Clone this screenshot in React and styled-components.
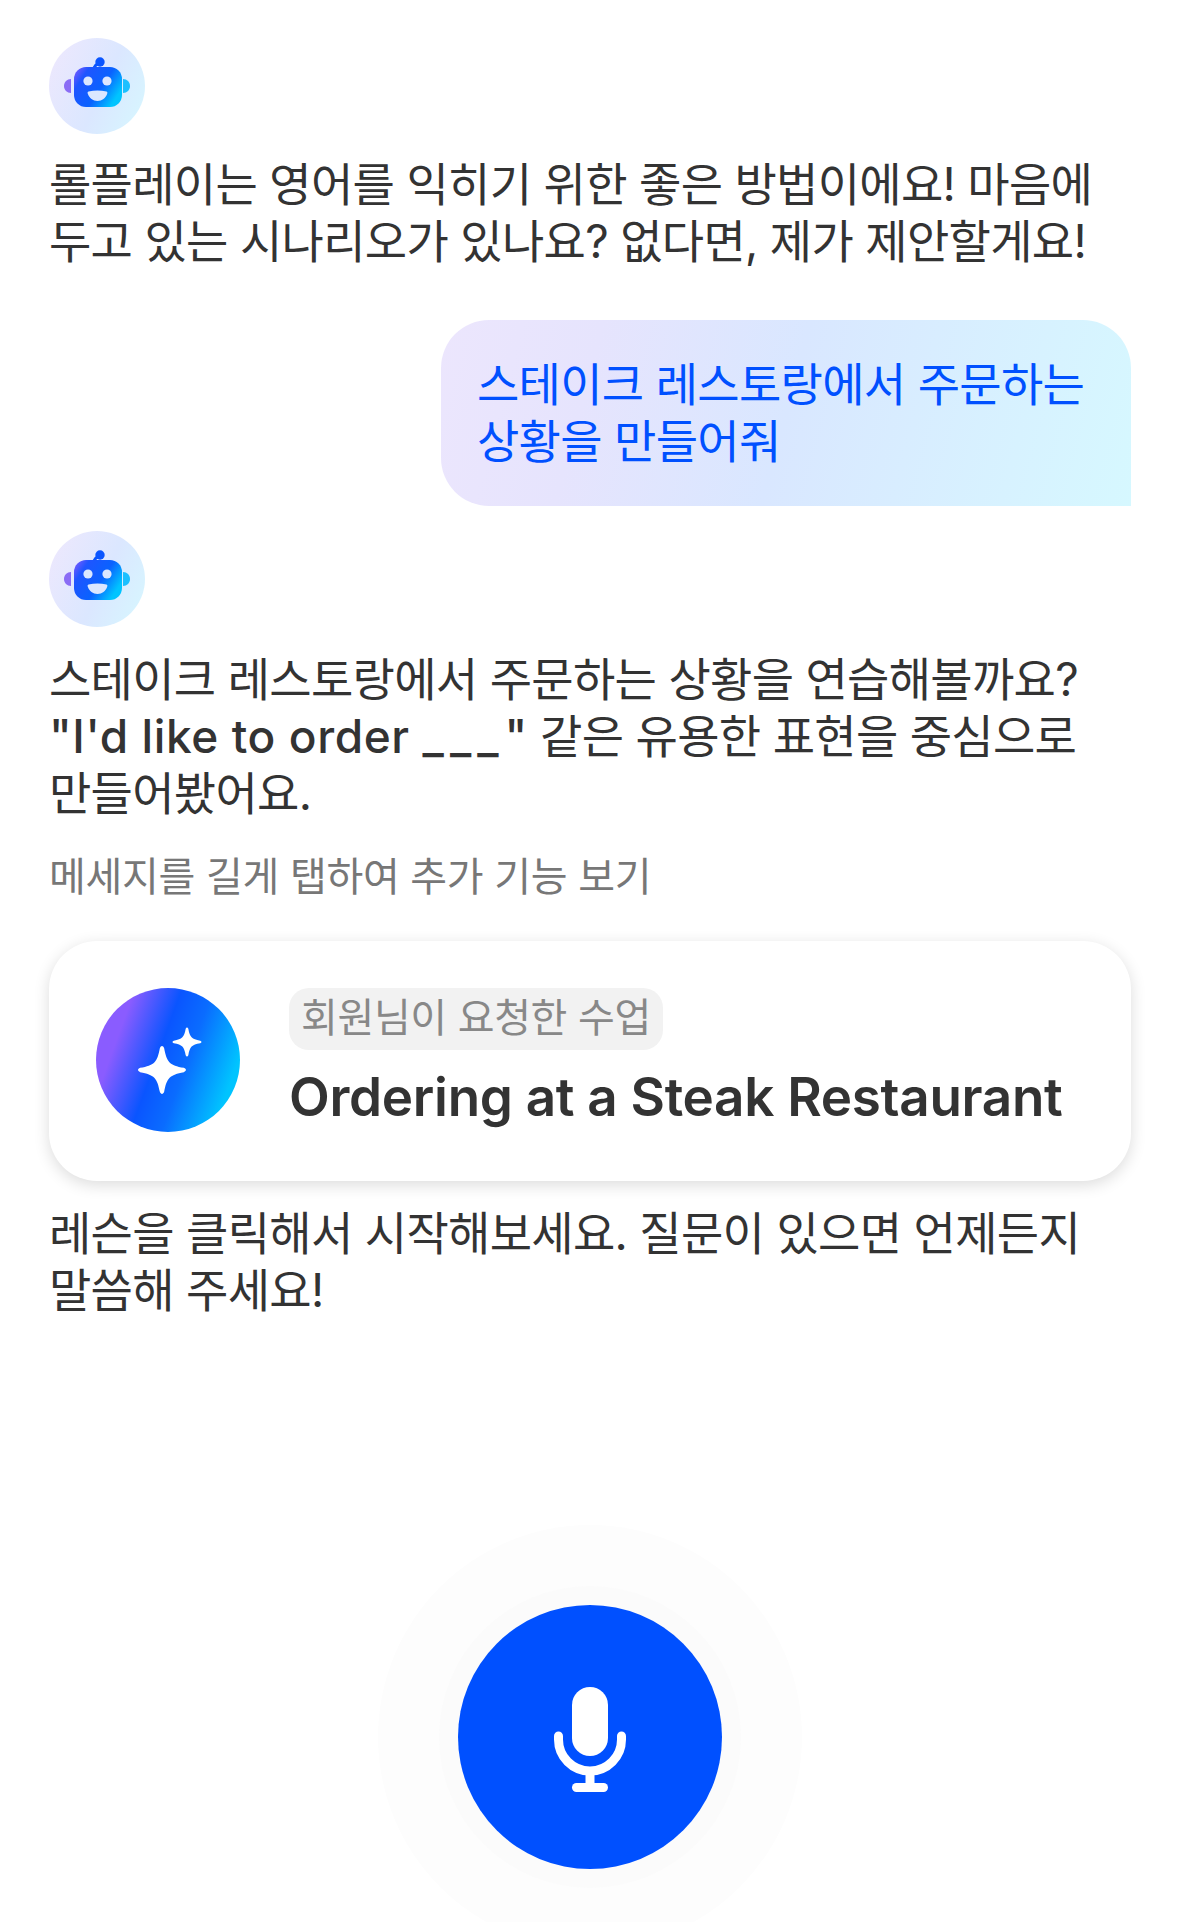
import React from 'react'
import styled, { createGlobalStyle } from 'styled-components'

const GlobalStyle = createGlobalStyle`
  html, body {
    margin: 0;
    padding: 0;
    background: #fff;
  }
  body {
    font-family: "Inter", "Noto Sans CJK KR", sans-serif;
    -webkit-font-smoothing: antialiased;
  }
`

const Page = styled.div`
  width: 1179px;
  height: 1922px;
  box-sizing: border-box;
  padding: 38px 48px 0 49px;
  overflow: hidden;
  display: flex;
  flex-direction: column;
  position: relative;
`

const AvatarWrap = styled.div`
  width: 96px;
  height: 96px;
  border-radius: 50%;
  flex-shrink: 0;
  background: linear-gradient(115deg, #efe8fd 0%, #dbe7ff 55%, #d6f8ff 100%);
`

const Message = styled.div`
  font-size: 46px;
  line-height: 57px;
  font-weight: 400;
  letter-spacing: -0.7px;
  color: #333;
  white-space: nowrap;
  margin-top: ${p => p.$top}px;
`

const LatinRun = styled.span`
  letter-spacing: 0.6px;
  font-weight: 500;
`

const Blank = styled.span`
  letter-spacing: 6px;
`

const Bubble = styled.div`
  align-self: flex-end;
  width: 690px;
  box-sizing: border-box;
  margin-top: 50px;
  margin-bottom: 25px;
  padding: 36px;
  border-radius: 48px 48px 0 48px;
  background: linear-gradient(105deg, #ece6fd 0%, #e6e4fd 22%, #d9e7ff 50%, #d6f8ff 100%);
  color: #0050ff;
  font-size: 46px;
  line-height: 57px;
  letter-spacing: -0.7px;
  white-space: nowrap;
`

const Hint = styled.div`
  margin-top: 30px;
  font-size: 40px;
  line-height: 50px;
  letter-spacing: -0.3px;
  color: #777;
`

const Card = styled.div`
  margin-top: 39px;
  height: 240px;
  box-sizing: border-box;
  padding: 47px 47px 0;
  border-radius: 48px;
  background: #fff;
  box-shadow: 0 4px 16px rgba(0, 0, 0, 0.14);
  display: flex;
  align-items: flex-start;
  gap: 49px;
`

const LessonBadge = styled.div`
  width: 144px;
  height: 144px;
  flex-shrink: 0;
  border-radius: 50%;
  background: linear-gradient(110deg, #8a5cff 20%, #0a55ff 44%, #0a6cff 60%, #00c4ff 86%);
`

const CardBody = styled.div`
  display: flex;
  flex-direction: column;
  align-items: flex-start;
  min-width: 0;
`

const Tag = styled.div`
  height: 62px;
  box-sizing: border-box;
  padding: 0 12px;
  border-radius: 20px;
  background: #f2f2f2;
  color: #888;
  font-size: 40px;
  line-height: 60px;
  letter-spacing: -0.35px;
  white-space: nowrap;
`

const Title = styled.div`
  margin-top: 15px;
  font-size: 53px;
  line-height: 64px;
  font-weight: 600;
  letter-spacing: -0.3px;
  color: #333;
  white-space: nowrap;
`

const MicDock = styled.div`
  position: absolute;
  left: 378px;
  top: 1525px;
  width: 424px;
  height: 424px;
  border-radius: 50%;
  background: #fdfdfd;
  display: flex;
  align-items: center;
  justify-content: center;
`

const MicHalo = styled.div`
  width: 302px;
  height: 302px;
  border-radius: 50%;
  background: #fbfbfb;
  display: flex;
  align-items: center;
  justify-content: center;
`

const MicButton = styled.button`
  width: 264px;
  height: 264px;
  padding: 0;
  border: 0;
  border-radius: 50%;
  background: #0050ff;
  display: flex;
  align-items: center;
  justify-content: center;
`

// four-point sparkle with softened tips
const sparkle = (cx, cy, r) => {
  const t = r * 0.09
  const k = r * 0.2
  return `M${cx - t} ${cy - r + t}
    C${cx - t * 0.5} ${cy - r - t * 0.3} ${cx + t * 0.5} ${cy - r - t * 0.3} ${cx + t} ${cy - r + t}
    C${cx + k} ${cy - k * 1.6} ${cx + k * 1.6} ${cy - k} ${cx + r - t} ${cy - t}
    C${cx + r + t * 0.3} ${cy - t * 0.5} ${cx + r + t * 0.3} ${cy + t * 0.5} ${cx + r - t} ${cy + t}
    C${cx + k * 1.6} ${cy + k} ${cx + k} ${cy + k * 1.6} ${cx + t} ${cy + r - t}
    C${cx + t * 0.5} ${cy + r + t * 0.3} ${cx - t * 0.5} ${cy + r + t * 0.3} ${cx - t} ${cy + r - t}
    C${cx - k} ${cy + k * 1.6} ${cx - k * 1.6} ${cy + k} ${cx - r + t} ${cy + t}
    C${cx - r - t * 0.3} ${cy + t * 0.5} ${cx - r - t * 0.3} ${cy - t * 0.5} ${cx - r + t} ${cy - t}
    C${cx - k * 1.6} ${cy - k} ${cx - k} ${cy - k * 1.6} ${cx - t} ${cy - r + t}Z`
}

const RobotAvatar = ({ id }) => (
  <AvatarWrap>
    <svg width="96" height="96" viewBox="0 0 96 96">
      <defs>
        <linearGradient id={id} x1="0" y1="0" x2="1" y2="0.55">
          <stop offset="0" stopColor="#8a5cff" />
          <stop offset="0.25" stopColor="#1f55ff" />
          <stop offset="0.65" stopColor="#0a62ff" />
          <stop offset="1" stopColor="#00c4ff" />
        </linearGradient>
      </defs>
      <path d="M15 48c0-4 3-7 7-7v14c-4 0-7-3-7-7z" fill="#8a6cf5" />
      <path d="M81 48c0-4-3-7-7-7v14c4 0 7-3 7-7z" fill="#1cc0ff" />
      <path d="M45 30c1-3 3-4 5-5" fill="none" stroke="#0a55ff" strokeWidth="3" />
      <circle cx="51" cy="24" r="4.7" fill="#0a55ff" />
      <rect x="25" y="29" width="48" height="40" rx="12" fill={`url(#${id})`} />
      <circle cx="39" cy="43" r="4.6" fill="#dbe7ff" />
      <circle cx="58" cy="43" r="4.6" fill="#dbe7ff" />
      <path d="M39.5 53.5c6-1.5 12-1.5 18 0 1.2.4 1 1.6.6 2.6-1.4 4-5 6.900-9.600 6.900s-8.200-2.900-9.600-6.900c-.4-1-.600-2.200.6-2.600z" fill="#dbe7ff" />
    </svg>
  </AvatarWrap>
)

const SparkleIcon = () => (
  <svg width="144" height="144" viewBox="0 0 144 144">
    <path d={sparkle(66, 82, 24)} fill="#fff" />
    <path d={sparkle(91, 54, 14.5)} fill="#fff" />
  </svg>
)

const MicIcon = () => (
  <svg width="72" height="105" viewBox="0 0 72 105" style={{ marginTop: 4 }}>
    <rect x="18" y="0" width="36" height="69" rx="18" fill="#fff" />
    <path d="M4.500 49v3.500a31.500 31.500 0 0 0 63 0V49" fill="none" stroke="#fff" strokeWidth="9" strokeLinecap="round" />
    <path d="M36 84v16" stroke="#fff" strokeWidth="9" />
    <path d="M22.500 100.500h27" stroke="#fff" strokeWidth="9" strokeLinecap="round" />
  </svg>
)

const App = () => {
  return (
    <>
      <GlobalStyle />
      <Page>
        <RobotAvatar id="robot-a" />
        <Message $top={22}>
          롤플레이는 영어를 익히기 위한 좋은 방법이에요! 마음에<br />
          두고 있는 시나리오가 있나요? 없다면, 제가 제안할게요!
        </Message>

        <Bubble>
          스테이크 레스토랑에서 주문하는<br />
          상황을 만들어줘
        </Bubble>

        <RobotAvatar id="robot-b" />
        <Message $top={24}>
          스테이크 레스토랑에서 주문하는 상황을 연습해볼까요?<br />
          <LatinRun>"I'd like to order <Blank>___</Blank>"</LatinRun> 같은 유용한 표현을 중심으로<br />
          만들어봤어요.
        </Message>
        <Hint>메세지를 길게 탭하여 추가 기능 보기</Hint>

        <Card>
          <LessonBadge>
            <SparkleIcon />
          </LessonBadge>
          <CardBody>
            <Tag>회원님이 요청한 수업</Tag>
            <Title>Ordering at a Steak Restaurant</Title>
          </CardBody>
        </Card>

        <Message $top={24}>
          레슨을 클릭해서 시작해보세요. 질문이 있으면 언제든지<br />
          말씀해 주세요!
        </Message>

        <MicDock>
          <MicHalo>
            <MicButton>
              <MicIcon />
            </MicButton>
          </MicHalo>
        </MicDock>
      </Page>
    </>
  )
}

export default App
